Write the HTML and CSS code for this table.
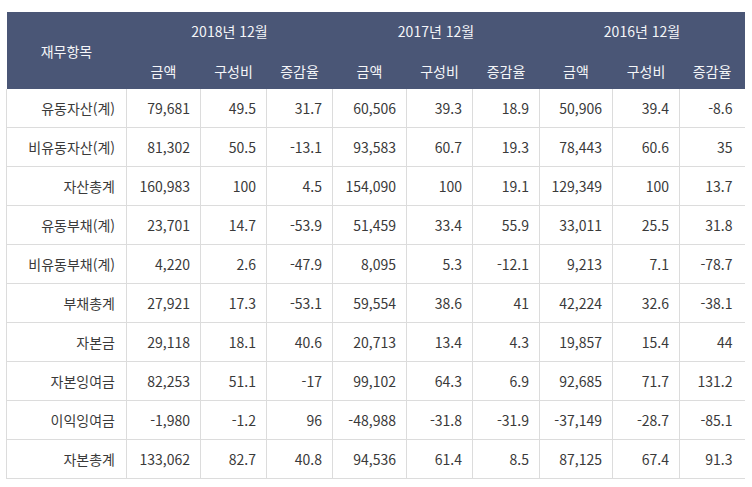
FILE: index.html
```html
<!DOCTYPE html>
<html lang="ko">
<head>
<meta charset="utf-8">
<link rel="stylesheet" href="styles.css">
</head>
<body>
<table class="fin">
  <colgroup>
    <col class="c-name"><col class="c-amt"><col class="c-r"><col class="c-r">
    <col class="c-amt"><col class="c-r"><col class="c-r2">
    <col class="c-amt2"><col class="c-r2"><col class="c-last">
  </colgroup>
  <thead>
    <tr class="h1">
      <th rowspan="2">재무항목</th>
      <th colspan="3">2018년 12월</th>
      <th colspan="3">2017년 12월</th>
      <th colspan="3">2016년 12월</th>
    </tr>
    <tr class="h2">
      <th>금액</th><th>구성비</th><th>증감율</th>
      <th>금액</th><th>구성비</th><th>증감율</th>
      <th>금액</th><th>구성비</th><th>증감율</th>
    </tr>
  </thead>
  <tbody>
    <tr><td>유동자산(계)</td><td>79,681</td><td>49.5</td><td>31.7</td><td>60,506</td><td>39.3</td><td>18.9</td><td>50,906</td><td>39.4</td><td>-8.6</td></tr>
    <tr><td>비유동자산(계)</td><td>81,302</td><td>50.5</td><td>-13.1</td><td>93,583</td><td>60.7</td><td>19.3</td><td>78,443</td><td>60.6</td><td>35</td></tr>
    <tr><td>자산총계</td><td>160,983</td><td>100</td><td>4.5</td><td>154,090</td><td>100</td><td>19.1</td><td>129,349</td><td>100</td><td>13.7</td></tr>
    <tr><td>유동부채(계)</td><td>23,701</td><td>14.7</td><td>-53.9</td><td>51,459</td><td>33.4</td><td>55.9</td><td>33,011</td><td>25.5</td><td>31.8</td></tr>
    <tr><td>비유동부채(계)</td><td>4,220</td><td>2.6</td><td>-47.9</td><td>8,095</td><td>5.3</td><td>-12.1</td><td>9,213</td><td>7.1</td><td>-78.7</td></tr>
    <tr><td>부채총계</td><td>27,921</td><td>17.3</td><td>-53.1</td><td>59,554</td><td>38.6</td><td>41</td><td>42,224</td><td>32.6</td><td>-38.1</td></tr>
    <tr><td>자본금</td><td>29,118</td><td>18.1</td><td>40.6</td><td>20,713</td><td>13.4</td><td>4.3</td><td>19,857</td><td>15.4</td><td>44</td></tr>
    <tr><td>자본잉여금</td><td>82,253</td><td>51.1</td><td>-17</td><td>99,102</td><td>64.3</td><td>6.9</td><td>92,685</td><td>71.7</td><td>131.2</td></tr>
    <tr><td>이익잉여금</td><td>-1,980</td><td>-1.2</td><td>96</td><td>-48,988</td><td>-31.8</td><td>-31.9</td><td>-37,149</td><td>-28.7</td><td>-85.1</td></tr>
    <tr><td>자본총계</td><td>133,062</td><td>82.7</td><td>40.8</td><td>94,536</td><td>61.4</td><td>8.5</td><td>87,125</td><td>67.4</td><td>91.3</td></tr>
  </tbody>
</table>
</body>
</html>
```
FILE: styles.css
```css
html, body {
  margin: 0;
  padding: 0;
  background: #ffffff;
}
body {
  padding: 12px 0 0 6px;
  font-family: "Noto Sans CJK KR", "Noto Sans", sans-serif;
  font-size: 14px;
  color: #3a3a3a;
}
.fin {
  border-collapse: collapse;
  table-layout: fixed;
  width: 738px;
}
.c-name { width: 120px; }
.c-amt { width: 74px; }
.c-r { width: 66px; }
.c-r2 { width: 67px; }
.c-amt2 { width: 73px; }
.c-last { width: 65px; }
.fin th {
  background: #4a5676;
  color: #f4f5f8;
  font-weight: normal;
  text-align: center;
  padding: 0;
  line-height: 20px;
}
.fin .h1 th { height: 38px; padding-top: 0; }
.fin .h1 th[rowspan] { padding-top: 0; }
.fin .h2 th { height: 39px; padding-top: 2px; box-sizing: border-box; }
.fin td {
  height: 38px;
  padding: 0 10px 0 0;
  text-align: right;
  border: 1px solid #dcdcdc;
  border-top: none;
  line-height: 20px;
  white-space: nowrap;
}
.fin td:first-child { padding-right: 11px; }
.fin td:last-child { border-right: none; padding-right: 12px; }
```
